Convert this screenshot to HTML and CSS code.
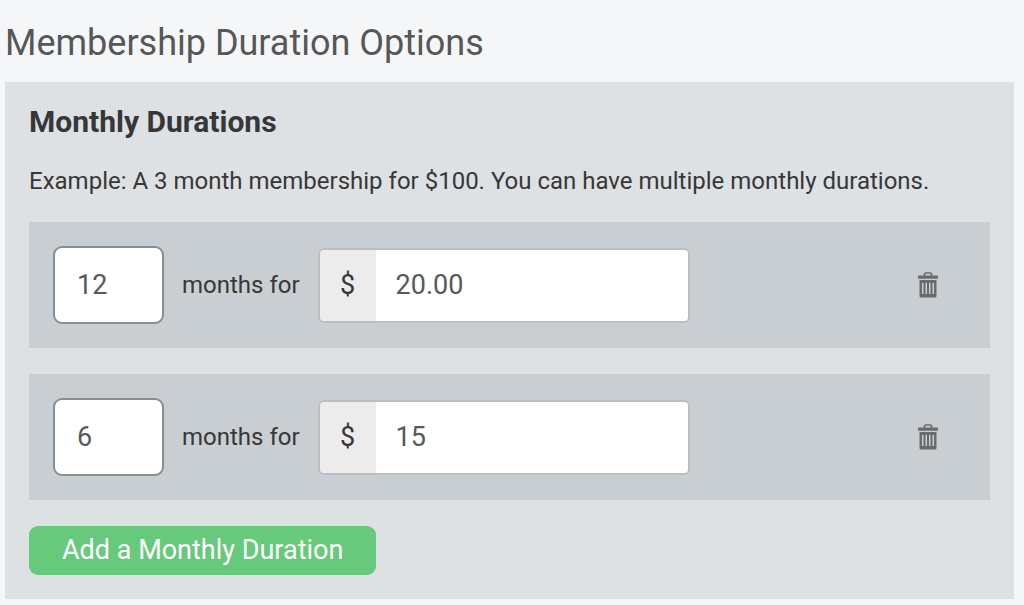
FILE: index.html
```html
<!DOCTYPE html>
<html lang="en">
<head>
  <meta charset="UTF-8">
  <meta name="viewport" content="width=device-width, initial-scale=1.0">
  <title>Membership Duration Options</title>
  <link rel="stylesheet" href="styles.css">
</head>
<body>
  <h1 class="page-title">Membership Duration Options</h1>

  <form class="panel">
    <h2 class="panel-title">Monthly Durations</h2>
    <p class="panel-text">Example: A 3 month membership for $100. You can have multiple monthly durations.</p>

    <!-- Duration Rows -->
    <div class="duration-row">
      <input class="months-input" type="text" id="months1" value="12">
      <label class="months-label" for="months1">months for</label>
      <div class="price-group">
        <label class="price-prefix" for="price1">$</label>
        <input class="price-input" type="text" id="price1" value="20.00">
      </div>
      <button class="delete-btn" type="button" aria-label="Delete">
        <svg class="trash-icon" viewBox="0 0 20 26">
          <path d="M6.5 4V2Q6.5 1 7.5 1H12.5Q13.5 1 13.5 2V4" fill="none" stroke="currentColor" stroke-width="1.6"/>
          <rect x="0" y="3.5" width="20" height="3.2" rx="0.8" fill="currentColor"/>
          <path fill="currentColor" fill-rule="evenodd" d="M1.5 8H18.5V24Q18.5 25.5 17 25.5H3Q1.5 25.5 1.5 24ZM4 11V22H5.5V11ZM7.5 11V22H9V11ZM11 11V22H12.5V11ZM14.5 11V22H16V11Z"/>
        </svg>
      </button>
    </div>

    <div class="duration-row">
      <input class="months-input" type="text" id="months2" value="6">
      <label class="months-label" for="months2">months for</label>
      <div class="price-group">
        <label class="price-prefix" for="price2">$</label>
        <input class="price-input" type="text" id="price2" value="15">
      </div>
      <button class="delete-btn" type="button" aria-label="Delete">
        <svg class="trash-icon" viewBox="0 0 20 26">
          <path d="M6.5 4V2Q6.5 1 7.5 1H12.5Q13.5 1 13.5 2V4" fill="none" stroke="currentColor" stroke-width="1.6"/>
          <rect x="0" y="3.5" width="20" height="3.2" rx="0.8" fill="currentColor"/>
          <path fill="currentColor" fill-rule="evenodd" d="M1.5 8H18.5V24Q18.5 25.5 17 25.5H3Q1.5 25.5 1.5 24ZM4 11V22H5.5V11ZM7.5 11V22H9V11ZM11 11V22H12.5V11ZM14.5 11V22H16V11Z"/>
        </svg>
      </button>
    </div>

    <button class="add-btn" type="button">Add a Monthly Duration</button>
  </form>
</body>
</html>
```
FILE: styles.css
```css
* {
  margin: 0;
  padding: 0;
  box-sizing: border-box;
}

body {
  padding: 18px 10px 5px 5px;
  font-family: Roboto, Arial, sans-serif;
  font-size: 24px;
  color: #373737;
  background: #f5f6f8;
}

.page-title {
  margin-bottom: 14px;
  font-size: 36px;
  font-weight: 400;
  line-height: 50px;
  color: #555758;
}

/* Panel */
.panel {
  padding: 24px;
  background: #dde1e4;
}

.panel-title {
  margin-bottom: 24px;
  font-size: 30px;
  font-weight: 700;
  line-height: 32px;
}

.panel-text {
  margin-bottom: 22px;
  line-height: 38px;
}

/* Duration Rows */
.duration-row {
  display: flex;
  align-items: center;
  margin-bottom: 26px;
  padding: 24px 48px 24px 24px;
  background: #c9ced2;
}

.months-input,
.price-input {
  font-family: inherit;
  font-size: 27px;
  color: #58595a;
  background: #fff;
}

.months-input {
  width: 111px;
  height: 78px;
  padding: 0 22px;
  border: 2px solid #8b8c8e;
  border-radius: 9px;
}

.months-label {
  margin: 0 18px;
}

.price-group {
  display: flex;
  flex: 0 1 372px;
  height: 75px;
  border: 2px solid #bcbec0;
  border-radius: 6px;
  overflow: hidden;
}

.price-prefix {
  display: flex;
  align-items: center;
  justify-content: center;
  flex: 0 0 56px;
  font-size: 27px;
  background: #ececec;
}

.price-input {
  flex: 1;
  min-width: 0;
  padding: 0 20px;
  border: none;
}

/* Buttons */
.delete-btn {
  display: flex;
  margin-left: auto;
  padding: 4px;
  border: none;
  color: #6b6b6b;
  background: none;
  cursor: pointer;
}

.trash-icon {
  width: 20px;
  height: 26px;
}

.add-btn {
  display: block;
  padding: 0 33px;
  border: none;
  border-radius: 9px;
  font-family: inherit;
  font-size: 27px;
  line-height: 49px;
  color: #fff;
  background: #67c97b;
  cursor: pointer;
}
```
